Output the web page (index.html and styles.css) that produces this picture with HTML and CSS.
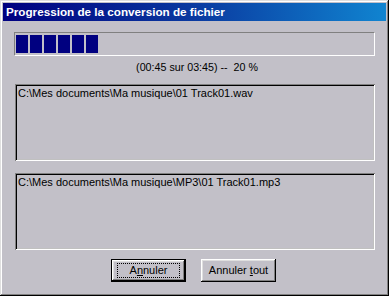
FILE: index.html
```html
<!DOCTYPE html>
<html>
<head>
<meta charset="utf-8">
<link rel="stylesheet" href="styles.css">
</head>
<body>
<div class="window">
  <div class="titlebar">Progression de la conversion de fichier</div>
  <div class="content">
    <div class="progress">
      <div class="block"></div>
      <div class="block"></div>
      <div class="block"></div>
      <div class="block"></div>
      <div class="block"></div>
      <div class="block"></div>
    </div>
    <div class="status">(00:45 sur 03:45) --&nbsp; 20 %</div>
    <div class="field first">C:\Mes documents\Ma musique\01 Track01.wav</div>
    <div class="field second">C:\Mes documents\Ma musique\MP3\01 Track01.mp3</div>
    <div class="buttons">
      <button class="btn default"><span class="focus">A<u>n</u>nuler</span></button>
      <button class="btn"><span class="label">Annuler <u>t</u>out</span></button>
    </div>
  </div>
</div>
</body>
</html>
```
FILE: styles.css
```css
html, body {
  margin: 0;
  padding: 0;
  background: #c2c0c8;
}
.window {
  width: 389px;
  height: 296px;
  box-sizing: border-box;
  padding: 3px;
  background: #c2c0c8;
  box-shadow: inset -1px -1px 0 #000, inset 1px 1px 0 #dfdfdf, inset -2px -2px 0 #808080, inset 2px 2px 0 #fff;
  font-family: "Liberation Sans", Arial, sans-serif;
  font-size: 11px;
  color: #000;
}
.titlebar {
  height: 18px;
  line-height: 18px;
  padding-left: 3px;
  background: linear-gradient(to right, #000080 0%, #0a3aa0 50%, #1084d0 100%);
  color: #fff;
  font-weight: bold;
  font-size: 11.7px;
  white-space: nowrap;
}
.content {
  display: flex;
  flex-direction: column;
  padding: 11px 11px 0 11px;
}
.progress {
  height: 24px;
  box-sizing: border-box;
  border-top: 1px solid #808080;
  border-left: 1px solid #808080;
  border-bottom: 1px solid #fff;
  border-right: 1px solid #fff;
  padding: 2px 1px;
  display: flex;
  gap: 2px;
}
.block {
  width: 12px;
  height: 18px;
  background: #000080;
}
.status {
  margin-top: 5px;
  height: 13px;
  line-height: 13px;
  text-align: center;
  padding-left: 5px;
  font-size: 10.7px;
}
.field {
  margin-left: 1px;
  height: 77px;
  box-sizing: border-box;
  padding: 3px 0 0 3px;
  line-height: 13px;
  white-space: nowrap;
  overflow: hidden;
  box-shadow: inset 1px 1px 0 #808080, inset -1px -1px 0 #fff, inset 2px 2px 0 #000, inset -2px -2px 0 #c0c0c0;
}
.field.first {
  margin-top: 10px;
}
.field.second {
  margin-top: 12px;
}
.buttons {
  margin-top: 9px;
  display: flex;
  justify-content: center;
  gap: 15px;
  padding-right: 2px;
}
.btn {
  width: 75px;
  height: 23px;
  margin: 0;
  padding: 0;
  border: none;
  background: #c2c0c8;
  font-family: "Liberation Sans", Arial, sans-serif;
  font-size: 11px;
  color: #000;
  box-shadow: inset -1px -1px 0 #000, inset 1px 1px 0 #fff, inset -2px -2px 0 #808080, inset 2px 2px 0 #dfdfdf;
  display: flex;
  align-items: center;
  justify-content: center;
}
.btn.default {
  box-shadow: inset 0 0 0 1px #000, inset -2px -2px 0 #000, inset 2px 2px 0 #fff, inset -3px -3px 0 #808080, inset 3px 3px 0 #dfdfdf;
}
.label {
  display: block;
  white-space: pre;
  line-height: 13px;
}
.focus {
  display: block;
  width: 63px;
  height: 15px;
  line-height: 13px;
  box-sizing: border-box;
  border: 1px dotted #000;
  text-align: center;
}
```
